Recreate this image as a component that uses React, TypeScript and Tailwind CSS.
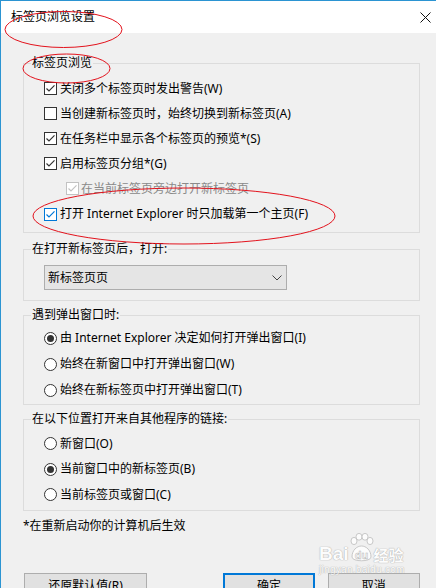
import React from 'react';

const font = "font-['Noto_Sans','Noto_Sans_CJK_SC',sans-serif]";

const Check: React.FC<{ tone?: 'normal' | 'blue' | 'disabled' }> = ({ tone = 'normal' }) => {
  const color = tone === 'blue' ? '#0078d7' : tone === 'disabled' ? '#c2c2c2' : '#333333';
  return (
    <svg width="13" height="13" viewBox="0 0 13 13" className="shrink-0">
      <rect x="0.5" y="0.5" width="12" height="12" fill="#fff" stroke={color} />
      <polyline points="2.5,6.5 5,9 10.5,3.3" fill="none" stroke={color} strokeWidth="1.2" />
    </svg>
  );
};

const Box: React.FC = () => (
  <svg width="13" height="13" viewBox="0 0 13 13" className="shrink-0">
    <rect x="0.5" y="0.5" width="12" height="12" fill="#fff" stroke="#333" />
  </svg>
);

const Radio: React.FC<{ on?: boolean }> = ({ on }) => (
  <svg width="13" height="13" viewBox="0 0 13 13" className="shrink-0">
    <circle cx="6.5" cy="6.5" r="6" fill="#fff" stroke="#333" />
    {on && <circle cx="6.5" cy="6.5" r="3.5" fill="#333" />}
  </svg>
);

const Group: React.FC<{ title: string; className?: string; inner?: string; children: React.ReactNode }> = ({
  title,
  className,
  inner,
  children,
}) => (
  <fieldset className={`border border-[#dcdcdc] ${className ?? ''}`}>
    <legend className="ml-[7px] px-px leading-[16px]">{title}</legend>
    <div className={`pl-[20px] ${inner ?? ''}`}>{children}</div>
  </fieldset>
);

export default function App() {
  return (
    <div className={`relative w-[436px] h-[588px] overflow-hidden bg-[#f0f0f0] border-l border-[#2b94d2] text-[12px] text-black ${font}`}>
      {/* title bar */}
      <div className="h-[33px] bg-white border-t border-[#2b94d2] flex items-center justify-between pl-[10px] pr-[5px]">
        <span className="text-[12px] leading-none">标签页浏览设置</span>
        <svg width="11" height="11" viewBox="0 0 11 11">
          <path d="M0.5 0.5 L10.5 10.5 M10.5 0.5 L0.5 10.5" stroke="#111" strokeWidth="1" />
        </svg>
      </div>

      <div className="pl-[22px] pr-[16px] pt-[22px]">
        <Group title="标签页浏览" inner="pt-[5px] pb-[5px]">
          <div className="flex flex-col">
            <label className="h-[25px] flex items-center gap-[3px]">
              <Check />
              <span>关闭多个标签页时发出警告(W)</span>
            </label>
            <label className="h-[25px] flex items-center gap-[3px]">
              <Box />
              <span>当创建新标签页时，始终切换到新标签页(A)</span>
            </label>
            <label className="h-[25px] flex items-center gap-[3px]">
              <Check />
              <span>在任务栏中显示各个标签页的预览*(S)</span>
            </label>
            <label className="h-[25px] flex items-center gap-[3px]">
              <Check />
              <span>启用标签页分组*(G)</span>
            </label>
            <label className="h-[25px] flex items-center gap-[2px] pl-[22px] text-[#8a8a8a]">
              <Check tone="disabled" />
              <span>在当前标签页旁边打开新标签页</span>
            </label>
            <label className="h-[26px] flex items-center gap-[3px]">
              <Check tone="blue" />
              <span>打开 Internet Explorer 时只加载第一个主页(F)</span>
            </label>
          </div>
        </Group>

        <Group title="在打开新标签页后，打开:" className="mt-[8px]" inner="pt-[8px] pb-[10px]">
          <div className="w-[243px] h-[25px] bg-[#e5e5e5] border border-[#adadad] flex items-center justify-between pl-[3px] pr-[4px]">
            <span>新标签页页</span>
            <svg width="10" height="6" viewBox="0 0 10 6">
              <polyline points="0.5,0.5 5,5 9.5,0.5" fill="none" stroke="#444" strokeWidth="1" />
            </svg>
          </div>
        </Group>

        <Group title="遇到弹出窗口时:" className="mt-[6px]" inner="pt-[2px] pb-[1px]">
          <div className="flex flex-col">
            <label className="h-[26px] flex items-center gap-[3px]">
              <Radio on />
              <span>由 Internet Explorer 决定如何打开弹出窗口(I)</span>
            </label>
            <label className="h-[26px] flex items-center gap-[3px]">
              <Radio />
              <span>始终在新窗口中打开弹出窗口(W)</span>
            </label>
            <label className="h-[26px] flex items-center gap-[3px]">
              <Radio />
              <span>始终在新标签页中打开弹出窗口(T)</span>
            </label>
          </div>
        </Group>

        <Group title="在以下位置打开来自其他程序的链接:" className="mt-[6px]" inner="pt-[4px] pb-[2px]">
          <div className="flex flex-col">
            <label className="h-[25.5px] flex items-center gap-[3px]">
              <Radio />
              <span>新窗口(O)</span>
            </label>
            <label className="h-[25.5px] flex items-center gap-[3px]">
              <Radio on />
              <span>当前窗口中的新标签页(B)</span>
            </label>
            <label className="h-[25.5px] flex items-center gap-[3px]">
              <Radio />
              <span>当前标签页或窗口(C)</span>
            </label>
          </div>
        </Group>

        <p className="mt-[7px] leading-[16px]">*在重新启动你的计算机后生效</p>

        <div className="mt-[39px] flex items-start">
          <button className="ml-px w-[124px] h-[26px] bg-[#e1e1e1] border border-[#adadad]">还原默认值(R)</button>
          <button className="ml-[76px] w-[92px] h-[26px] bg-[#e1e1e1] border-2 border-[#0078d7]">确定</button>
          <button className="ml-[13px] w-[93px] h-[26px] bg-[#e1e1e1] border border-[#adadad]">取消</button>
        </div>
      </div>

      {/* hand-drawn annotation rings */}
      <svg className="absolute left-0 top-0 pointer-events-none" width="436" height="588" viewBox="0 0 436 588">
        <g fill="none" stroke="#e3121c" strokeWidth="1">
          <ellipse cx="62.5" cy="29.5" rx="58.5" ry="18" />
          <ellipse cx="65.5" cy="68.5" rx="43.5" ry="14.5" />
          <ellipse cx="183" cy="216" rx="151" ry="28" />
        </g>
      </svg>

      {/* watermark */}
      <div className="absolute left-[318px] top-[533px] w-[95px] h-[44px] pointer-events-none opacity-80">
        <div className="flex items-end h-[30px]">
          <span className="text-[19px] leading-none font-bold text-white [text-shadow:0_0_1px_#9f9f9f,0_0_1px_#9f9f9f] font-['Liberation_Sans',sans-serif]">
            Bai
          </span>
          <svg width="27" height="30" viewBox="0 0 27 30" className="-mx-[1px]">
            <g fill="#fff" stroke="#b0b0b0" strokeWidth="0.8">
              <ellipse cx="6" cy="8" rx="3" ry="3.6" />
              <ellipse cx="11" cy="3.8" rx="3" ry="3.4" />
              <ellipse cx="17" cy="3.8" rx="3" ry="3.4" />
              <ellipse cx="22" cy="8" rx="3" ry="3.6" />
              <path d="M4 24 C4 17 9 13 13.5 13 C18 13 23 17 23 24 C23 29 4 29 4 24 Z" />
            </g>
            <text x="13.5" y="26" textAnchor="middle" fontSize="11" fontWeight="bold" fill="#fff" stroke="#a8a8a8" strokeWidth="0.5" fontFamily="Liberation Sans, sans-serif">
              du
            </text>
          </svg>
          <span className="text-[15px] leading-none font-bold text-white [text-shadow:0_0_1px_#9f9f9f,0_0_1px_#9f9f9f] font-['Noto_Sans_CJK_SC',sans-serif] mb-[1px]">
            经验
          </span>
        </div>
        <div className="mt-[2px] text-[10px] leading-none text-white [text-shadow:0_0_1px_#a5a5a5,0_0_1px_#a5a5a5] font-['Liberation_Sans',sans-serif] tracking-[0.3px]">
          jingyan.baidu.com
        </div>
      </div>
    </div>
  );
}
